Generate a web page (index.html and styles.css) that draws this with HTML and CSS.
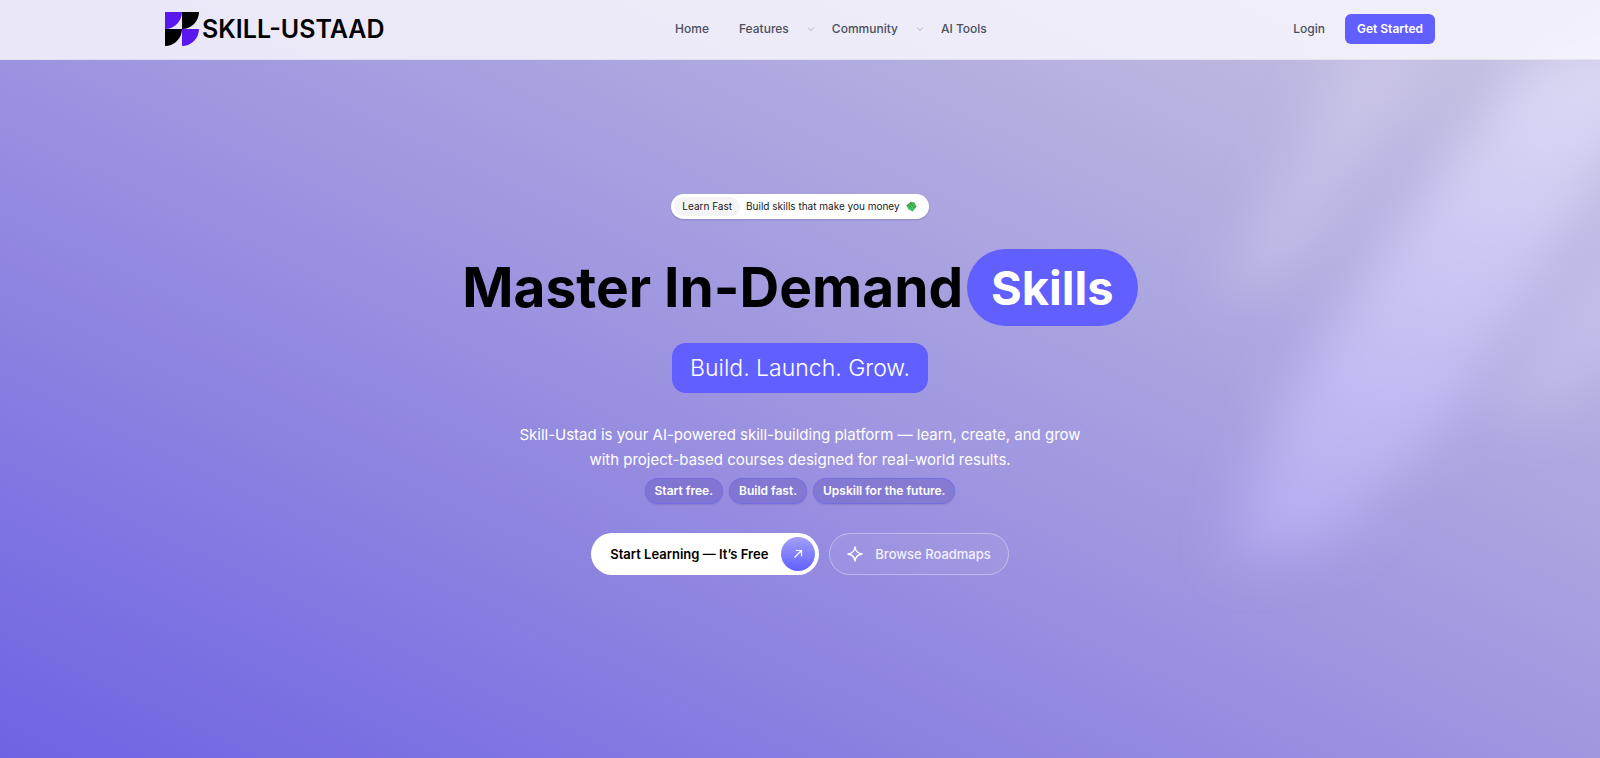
FILE: index.html
```html
<!DOCTYPE html>
<html lang="en">
<head>
<meta charset="utf-8">
<meta name="viewport" content="width=device-width, initial-scale=1">
<title>Skill-Ustaad</title>
<link rel="stylesheet" href="styles.css">
</head>
<body>
<svg class="beams" viewBox="0 0 600 758" aria-hidden="true">
  <defs>
    <filter id="soft" x="-100%" y="-30%" width="300%" height="160%"><feGaussianBlur stdDeviation="26"/></filter>
    <linearGradient id="fade" x1="0" y1="1" x2="0" y2="0">
      <stop offset="0" stop-color="#c0baff" stop-opacity=".55"/>
      <stop offset="1" stop-color="#e8e6fb" stop-opacity=".75"/>
    </linearGradient>
  </defs>
  <g filter="url(#soft)">
    <path d="M228 560 L280 410 L360 285 L435 180 L530 60 L700 20 L615 150 L530 290 L440 430 L325 545 Z" fill="url(#fade)"/>
    <path d="M215 300 L300 150 L350 40 L450 40 L390 120 L290 270 Z" fill="#dcd8f2" opacity=".4"/>
    <path d="M490 420 L560 300 L660 190 L660 320 L560 410 Z" fill="#d4d0f8" opacity=".4"/>
  </g>
</svg>

<header class="topbar">
  <div class="topbar-inner">
    <a class="brand" href="#">
      <svg class="brand-mark" viewBox="0 0 34 34" aria-hidden="true">
        <path fill="#5b17ee" d="M0 0H17A17 17 0 0 1 0 17Z"/>
        <path fill="#000" d="M17 0H34A17 17 0 0 1 17 17Z"/>
        <path fill="#000" d="M0 17H17A17 17 0 0 1 0 34Z"/>
        <path fill="#5b17ee" d="M17 17H34A17 17 0 0 1 17 34Z"/>
      </svg>
      <span>SKILL-USTAAD</span>
    </a>
    <nav class="nav" aria-label="Main">
      <a href="#">Home</a>
      <button type="button" class="nav-menu">Features
        <svg class="chevron" viewBox="0 0 8 8" aria-hidden="true"><path d="M1 2.5 4 5.5 7 2.5"/></svg>
      </button>
      <button type="button" class="nav-menu">Community
        <svg class="chevron" viewBox="0 0 8 8" aria-hidden="true"><path d="M1 2.5 4 5.5 7 2.5"/></svg>
      </button>
      <a class="nav-last" href="#">AI Tools</a>
    </nav>
    <div class="account">
      <a href="#">Login</a>
      <a class="start" href="#">Get Started</a>
    </div>
  </div>
</header>

<main class="hero">
  <a class="badge" href="#">
    <span class="badge-tag">Learn Fast</span>
    <span>Build skills that make you money</span>
    <svg class="money" viewBox="0 0 12 12" aria-hidden="true">
      <path d="M.5 5 5.5 .5 11.5 6 7 11.5Z" fill="#2f9e44"/>
      <path d="M5 1 9 1.3 11.5 6 8.5 7Z" fill="#43b85a"/>
      <path d="M.5 5 2.5 9 7 11.5 8 8Z" fill="#35c46a"/>
      <path d="M3.5 2.8 8.5 8.6" stroke="#8fd05e" fill="none"/>
    </svg>
  </a>

  <h1 class="title">Master In-Demand<span class="title-pill">Skills</span></h1>
  <p class="tagline">Build. Launch. Grow.</p>
  <p class="lead">Skill-Ustad is your AI-powered skill-building platform — learn, create, and grow with project-based courses designed for real-world results.</p>
  <ul class="chips">
    <li>Start free.</li>
    <li>Build fast.</li>
    <li>Upskill for the future.</li>
  </ul>
  <div class="actions">
    <a class="cta" href="#">Start Learning — It’s Free
      <span class="cta-disc"><svg viewBox="0 0 16 16" aria-hidden="true"><path d="M4 12 12 4M5.5 4H12V10.5"/></svg></span>
    </a>
    <a class="browse" href="#">
      <svg viewBox="0 0 16 16" aria-hidden="true"><path d="M8 1C8.6 5.6 10.4 7.4 15 8C10.4 8.6 8.6 10.4 8 15C7.4 10.4 5.6 8.6 1 8C5.6 7.4 7.4 5.6 8 1Z"/></svg>
      Browse Roadmaps
    </a>
  </div>
</main>
</body>
</html>
```
FILE: styles.css
```css
*, *::before, *::after { box-sizing: border-box; }

body {
  margin: 0;
  min-height: 100vh;
  position: relative;
  overflow-x: hidden;
  font-family: Inter, "Liberation Sans", sans-serif;
  font-size: 12px;
  color: #000;
  background: linear-gradient(to top right, #6f63e3, #9e96e0 49%, #c8c5e0);
}

a { color: inherit; text-decoration: none; }
button { font: inherit; color: inherit; background: none; border: 0; padding: 0; cursor: pointer; }
h1, p, ul { margin: 0; padding: 0; }

.beams {
  position: absolute;
  top: 0;
  right: 0;
  width: 600px;
  height: 758px;
  pointer-events: none;
}

.topbar {
  position: relative;
  background: rgba(250, 249, 252, .82);
  border-bottom: 1px solid rgba(220, 218, 235, .6);
}
.topbar-inner {
  display: flex;
  justify-content: space-between;
  align-items: center;
  max-width: 1270px;
  min-height: 59px;
  margin: 0 auto;
  padding-bottom: 2px;
}
.brand {
  display: flex;
  align-items: center;
  gap: 3px;
  font-size: 25px;
  font-weight: 600;
  line-height: 34px;
}
.brand-mark { width: 34px; height: 34px; }

.nav {
  display: flex;
  align-items: center;
  gap: 30px;
  padding-right: 16px;
  font-weight: 500;
  color: #4a5061;
}
.nav-menu { display: flex; align-items: center; gap: 18px; }
.nav-menu + .nav-menu, .nav-last { margin-left: -13px; }
.chevron { width: 8px; height: 8px; fill: none; stroke: #b3b3c2; stroke-width: 1; }

.account {
  display: flex;
  justify-content: flex-end;
  align-items: center;
  gap: 20px;
  font-weight: 500;
  color: #4a5061;
}
.start {
  padding: 0 12px;
  line-height: 30px;
  border-radius: 6px;
  background: #615fff;
  color: #fff;
  font-weight: 600;
}

.hero {
  position: relative;
  display: flex;
  flex-direction: column;
  align-items: center;
  padding: 134px 24px 80px;
}
.badge {
  display: flex;
  align-items: center;
  gap: 6px;
  padding: 3px 12px 3px 3px;
  border-radius: 13px;
  background: #fff;
  box-shadow: 0 1px 2px rgba(0, 0, 0, .15);
  font-size: 10px;
  line-height: 19px;
  color: #18181b;
}
.badge-tag { padding: 0 8px; border-radius: 10px; background: #f4f4f5; }
.money { width: 11px; height: 11px; }

.title {
  display: flex;
  flex-wrap: wrap;
  justify-content: center;
  align-items: center;
  gap: 4px;
  margin-top: 30px;
  font-size: 55px;
  font-weight: 700;
  line-height: 77px;
}
.title-pill {
  padding: 0 24px;
  border-radius: 39px;
  background: #615fff;
  color: #fff;
  font-size: 47px;
}
.tagline {
  margin-top: 17px;
  padding: 0 18px;
  border-radius: 14px;
  background: #615fff;
  color: #fff;
  font-size: 23px;
  font-weight: 300;
  line-height: 50px;
}
.lead {
  max-width: 576px;
  margin-top: 29px;
  color: #fff;
  font-size: 15px;
  line-height: 25px;
  text-align: center;
}
.chips {
  display: flex;
  flex-wrap: wrap;
  justify-content: center;
  gap: 6px;
  margin-top: 6px;
  list-style: none;
  color: #fff;
  font-weight: 600;
}
.chips li {
  padding: 0 9px;
  line-height: 24px;
  border: 1px solid rgba(97, 95, 255, .4);
  border-radius: 13px;
  background: rgba(85, 70, 180, .32);
  box-shadow: 0 1px 2px rgba(0, 0, 0, .1);
}
.actions {
  display: flex;
  flex-wrap: wrap;
  justify-content: center;
  gap: 10px;
  margin-top: 29px;
  font-size: 13px;
  font-weight: 500;
}
.cta, .browse { display: flex; align-items: center; min-height: 42px; border-radius: 21px; }
.cta { gap: 13px; padding: 0 4px 0 19px; background: #fff; font-weight: 600; }
.cta-disc {
  display: grid;
  place-items: center;
  width: 34px;
  height: 34px;
  border-radius: 50%;
  background: linear-gradient(#a3a0f8, #615fff);
}
.cta-disc svg { width: 14px; height: 14px; fill: none; stroke: #fff; stroke-width: 1.4; }
.browse {
  gap: 12px;
  padding: 0 17px;
  border: 1px solid rgba(255, 255, 255, .35);
  background: rgba(255, 255, 255, .06);
  color: #f2f0ff;
}
.browse svg { width: 16px; height: 16px; fill: none; stroke: #fff; stroke-width: 1.4; stroke-linejoin: round; }
```
